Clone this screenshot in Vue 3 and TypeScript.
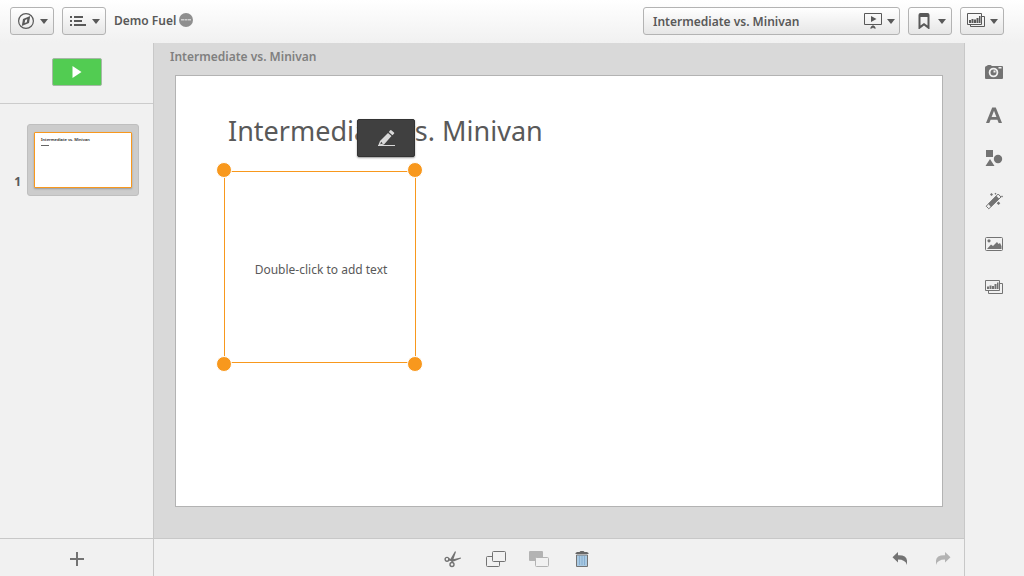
<script setup lang="ts">
import { ref } from 'vue'

interface Slide {
  id: number
  title: string
}

const appName = ref('Demo Fuel')
const storyName = ref('Intermediate vs. Minivan')
const slides = ref<Slide[]>([{ id: 1, title: 'Intermediate vs. Minivan' }])
const handles = ['tl', 'tr', 'bl', 'br']
</script>

<template>
  <div class="story">
    <header class="toolbar">
      <button class="tool" type="button" aria-label="Navigation">
        <svg width="18" height="18" viewBox="0 0 18 18">
          <circle cx="9" cy="9" r="7.4" fill="none" stroke="#595959" stroke-width="1.2" />
          <path d="M13.200 4 12 11 4.800 14 6 7z" fill="#595959" />
          <path d="M10.300 7 9.800 10.200 7.600 11 8.200 8z" fill="#f4f4f4" />
        </svg>
        <i class="caret"></i>
      </button>
      <button class="tool" type="button" aria-label="Menu">
        <svg width="18" height="18" viewBox="0 0 18 18">
          <path d="M1 4h2v2H1zM5 4h9v2H5zM1 8h2v2H1zM5 8h8v2H5zM1 12h2v2H1zM5 12h12v2H5z" fill="#595959" />
        </svg>
        <i class="caret"></i>
      </button>
      <div class="app-title">
        <span>{{ appName }}</span>
        <svg width="14" height="14" viewBox="0 0 14 14">
          <circle cx="7" cy="7" r="7" fill="#8f8f8f" />
          <path d="M2 6h3v1.500H2zM5.500 6h3v1.500h-3zM9 6h3v1.500H9z" fill="#d0d0d0" />
        </svg>
      </div>
      <button class="tool story-picker" type="button">
        <span class="picker-name">{{ storyName }}</span>
        <svg width="18" height="18" viewBox="0 0 18 18">
          <path d="M.5 1.500h17v11H.5zM9 13v2" fill="none" stroke="#595959" />
          <path d="M7 4 12.500 7 7 10zM7.500 14h3l1.500 2.500h-2L9 15.500 8 16.500H6z" fill="#595959" />
        </svg>
        <i class="caret"></i>
      </button>
      <button class="tool" type="button" aria-label="Bookmarks">
        <svg width="18" height="18" viewBox="0 0 18 18">
          <path d="M3.500 3Q3.500 1 5.500 1h7Q14.500 1 14.500 3v14h-1L9 13.500 4.500 17h-1zM5.500 5v8.500L9 11l3.500 2.500V5z" fill="#595959" fill-rule="evenodd" />
        </svg>
        <i class="caret"></i>
      </button>
      <button class="tool" type="button" aria-label="Sheets">
        <svg width="18" height="18" viewBox="0 0 18 18">
          <path d="M.5 1.500h14v11H.5zM15 4.500h2.500v10h-14V13" fill="none" stroke="#595959" />
          <path d="M2 8h2v3H2zM4.500 7h2v4h-2zM7 7.500h2V11H7zM9.500 6h2v5h-2zM12 4h1.500v7H12z" fill="#595959" />
        </svg>
        <i class="caret"></i>
      </button>
    </header>

    <div class="body">
      <aside class="timeline">
        <div class="play-area">
          <button class="play" type="button" aria-label="Play story">
            <svg width="10" height="12" viewBox="0 0 10 12"><path d="M.5 0 9.500 6 .5 12z" fill="#fff" /></svg>
          </button>
        </div>
        <ol class="slides">
          <li v-for="slide in slides" :key="slide.id" class="slide">
            <span class="slide-number">{{ slide.id }}</span>
            <button class="thumb" type="button" :aria-label="`Slide ${slide.id}`">
              <span class="thumb-page">
                <span class="thumb-title">{{ slide.title }}</span>
                <span class="thumb-line"></span>
              </span>
            </button>
          </li>
        </ol>
        <button class="add" type="button" aria-label="Add slide">
          <svg width="16" height="16" viewBox="0 0 16 16"><path d="M1 8h14M8 1v14" stroke="#737373" stroke-width="2" /></svg>
        </button>
      </aside>

      <main class="editor">
        <div class="canvas">
          <h2 class="canvas-title">{{ storyName }}</h2>
          <section class="page">
            <h1 class="page-title">{{ storyName }}</h1>
            <div class="selection">
              <p>Double-click to add text</p>
              <span v-for="h in handles" :key="h" class="handle" :class="h"></span>
            </div>
            <button class="edit" type="button" aria-label="Edit">
              <svg width="18" height="18" viewBox="0 0 18 18">
                <path d="M11 4 14.500 7 7 15.500 1 17 3 12zM11.800 3 13 1.500Q13.600.8 14.300 1.300L17 3.500q.6.500 0 1.200L15.400 6.200z" fill="#d9d9d9" />
                <path d="M4.200 12.800 5.800 14.500 3.200 15.300z" fill="#404040" />
                <path d="M1 16.500h17" stroke="#d9d9d9" />
              </svg>
            </button>
          </section>
        </div>
        <footer class="actions">
          <div class="edit-actions">
            <button type="button" aria-label="Cut">
              <svg width="18" height="18" viewBox="0 0 18 18">
                <g fill="none" stroke="#737373" stroke-width="1.400">
                  <circle cx="3" cy="9.300" r="1.900" /><circle cx="8" cy="14.500" r="2" />
                </g>
                <path d="M4.500 8.300 9 9.300 16.800 7.500 17 8.500 9.500 11.500 4.500 10.500zM7.200 12.800 7 8 11 1.200 12 1.800 9.500 9 8.700 12.800z" fill="#737373" />
              </svg>
            </button>
            <button type="button" aria-label="Copy">
              <svg width="20" height="18" viewBox="0 0 20 18">
                <rect x=".5" y="6.500" width="13" height="10" rx="1" fill="#f1f1f1" stroke="#737373" />
                <rect x="6.500" y="1.500" width="13" height="10" rx="1" fill="#f1f1f1" stroke="#737373" />
              </svg>
            </button>
            <button type="button" aria-label="Paste" disabled>
              <svg width="20" height="18" viewBox="0 0 20 18">
                <rect x="0" y="1" width="14" height="10" rx="1" fill="#b3b3b3" />
                <rect x="6.500" y="7.500" width="13" height="9" rx="1" fill="#f1f1f1" stroke="#b3b3b3" />
              </svg>
            </button>
            <button type="button" aria-label="Delete">
              <svg width="14" height="18" viewBox="0 0 14 18">
                <path d="M.5 4V3L2 2h2.500l1-1h3l1 1H12l1.500 1v1z" fill="#666" />
                <path d="M1.500 5h11v11.500h-11z" fill="#a9c9e2" stroke="#737373" />
                <path d="M4.500 6v9M7 6v9M9.500 6v9" stroke="#86aed0" />
              </svg>
            </button>
          </div>
          <button type="button" aria-label="Undo">
            <svg width="16" height="16" viewBox="0 0 16 16">
              <path d="M6 1v3.300Q14.500 4 15 9.500V14Q13.500 8.500 6 8.500V11.500L.5 6.200z" fill="#737373" />
            </svg>
          </button>
          <button type="button" aria-label="Redo" disabled>
            <svg width="16" height="16" viewBox="0 0 16 16">
              <path d="M10 1v3.300Q1.500 4 1 9.500V14Q2.500 8.500 10 8.500V11.500L15.500 6.200z" fill="#b3b3b3" />
            </svg>
          </button>
        </footer>
      </main>

      <aside class="library">
        <button type="button" aria-label="Snapshot library">
          <svg width="20" height="18" viewBox="0 0 20 18">
            <path d="M2.500 3 4 2h2.500L8 3h10q1 0 1 1v11q0 1-1 1H2q-1 0-1-1V4.500Q1 3 2.500 3z" fill="#737373" />
            <circle cx="9.500" cy="9.500" r="3.900" fill="none" stroke="#f1f1f1" stroke-width="1.800" />
            <path d="M14.500 4h3v1.500h-3zM9.500 9.500v-2h2v2z" fill="#f1f1f1" />
          </svg>
        </button>
        <button type="button" aria-label="Text objects">
          <svg width="18" height="18" viewBox="0 0 18 18">
            <path d="M7.200 1.500h3.600L17 17h-3.300l-1.300-3.300H5.600L4.300 17H1zM9 4.800 6.600 11h4.800z" fill="#737373" fill-rule="evenodd" />
          </svg>
        </button>
        <button type="button" aria-label="Shapes">
          <svg width="18" height="18" viewBox="0 0 18 18">
            <path d="M1 1h7v7H1zM5 10l4.500 7H.5z" fill="#737373" />
            <circle cx="13" cy="10" r="4.200" fill="#737373" />
          </svg>
        </button>
        <button type="button" aria-label="Effects library">
          <svg width="18" height="18" viewBox="0 0 18 18">
            <path d="M1.200 14.200 3.800 16.800 16 5 13.200 2z" fill="#f1f1f1" stroke="#737373" />
            <path d="M3.200 11.700 11.200 3.800 14.200 6.800 6 15z" fill="#737373" />
            <path d="m6.500 1 1.500 1.500L6.500 4 5 2.500zM13.500 9.500l1.800 1.800-1.800 1.800-1.800-1.800zM17 3.500l1 1-1 1-1-1zM10.500.8l1 1-1 1-1-1z" fill="#737373" />
          </svg>
        </button>
        <button type="button" aria-label="Media objects">
          <svg width="18" height="18" viewBox="0 0 18 18">
            <rect x=".5" y="2.500" width="17" height="13" rx="1" fill="none" stroke="#737373" />
            <path d="M2 14 6 9.500l2 1.500 4-4 1.500 2L15 8l1.500 3v3z" fill="#737373" />
            <circle cx="4" cy="5.800" r="1.600" fill="#737373" />
          </svg>
        </button>
        <button type="button" aria-label="Sheet library">
          <svg width="18" height="18" viewBox="0 0 18 18">
            <path d="M.5 2.500h14v10H.5zM15 5.500h2.500v10h-14V13" fill="none" stroke="#737373" />
            <path d="M2 8.500h2V11H2zM4.500 7.500h2V11h-2zM7 8h2v3H7zM9.500 6h2v5h-2zM12 4.500h1.500V11H12z" fill="#737373" />
          </svg>
        </button>
      </aside>
    </div>
  </div>
</template>

<style>
body {
  margin: 0;
}
</style>

<style scoped>
.story {
  display: flex;
  flex-direction: column;
  height: 100vh;
  background: #f1f1f1;
  color: #595959;
  font-family: "Noto Sans", "Open Sans", sans-serif;
  font-size: 12px;
}
.story * {
  box-sizing: border-box;
}
button {
  display: flex;
  align-items: center;
  justify-content: center;
  margin: 0;
  padding: 0;
  border: 0;
  background: none;
  color: inherit;
  font: inherit;
}
svg {
  display: block;
  flex: none;
}
.toolbar {
  display: flex;
  gap: 8px;
  height: 43px;
  padding: 7px 20px 8px 10px;
  background: linear-gradient(#fff, #f1f1f1);
}
.tool {
  gap: 5px;
  width: 44px;
  height: 28px;
  border: 1px solid #b3b3b3;
  border-radius: 3px;
  background: linear-gradient(#fff, #e6e6e6);
}
.caret {
  border: 4px solid transparent;
  border-top: 5px solid #595959;
  border-bottom: 0;
}
.app-title {
  display: flex;
  flex: 1;
  align-items: center;
  gap: 3px;
  height: 26px;
  font-weight: 600;
}
.story-picker {
  width: 257px;
  padding: 0 4px 0 9px;
  font-weight: 600;
}
.picker-name {
  flex: 1;
  text-align: left;
}
.body {
  display: flex;
  flex: 1;
  min-height: 0;
}
.timeline {
  display: flex;
  flex-direction: column;
  width: 154px;
  border-right: 1px solid #c8c8c8;
}
.play-area {
  display: flex;
  justify-content: center;
  padding: 15px 0 17px;
  border-bottom: 1px solid #ccc;
}
.play {
  width: 50px;
  height: 28px;
  border: 1px solid #a6b8a6;
  border-radius: 2px;
  background: #52cc52;
}
.slides {
  flex: 1;
  margin: 0;
  padding: 20px 14px 0 0;
  list-style: none;
}
.slide {
  display: flex;
  justify-content: flex-end;
  align-items: flex-end;
  gap: 6px;
}
.slide-number {
  padding-bottom: 6px;
  font-weight: 700;
  line-height: 16px;
}
.thumb {
  width: 112px;
  height: 72px;
  border: 1px solid #bfbfbf;
  border-radius: 3px;
  background: #ccc;
}
.thumb-page {
  display: flex;
  flex-direction: column;
  gap: 3px;
  width: 98px;
  height: 56px;
  padding: 4px 6px;
  border: 1px solid #f8981d;
  border-radius: 1px;
  background: #fff;
  box-shadow: 0 1px 2px #999;
  text-align: left;
}
.thumb-title {
  color: #222;
  font-size: 4px;
  font-weight: 600;
  line-height: 5px;
  white-space: nowrap;
}
.thumb-line {
  width: 8px;
  height: 1px;
  background: #666;
}
.add {
  height: 38px;
  padding-top: 3px;
  border-top: 1px solid #c8c8c8;
}
.editor {
  display: flex;
  flex: 1;
  flex-direction: column;
  min-width: 0;
}
.canvas {
  display: flex;
  flex: 1;
  flex-direction: column;
  padding: 4px 21px 31px;
  background: #d9d9d9;
}
.canvas-title {
  margin: 0 0 8px -5px;
  color: #808080;
  font-size: 12px;
  font-weight: 600;
  line-height: 20px;
}
.page {
  position: relative;
  flex: 1;
  padding: 35px 52px;
  border: 1px solid #b3b3b3;
  background: #fff;
}
.page-title {
  margin: 0;
  font-size: 27px;
  font-weight: 400;
  line-height: 40px;
  white-space: nowrap;
}
.selection {
  position: absolute;
  top: 95px;
  left: 48px;
  display: flex;
  align-items: center;
  justify-content: center;
  width: 192px;
  height: 192px;
  border: 1px solid #f8981d;
}
.selection p {
  margin: 0;
  padding: 4px 0 0 2px;
  white-space: nowrap;
}
.handle {
  position: absolute;
  width: 16px;
  height: 16px;
  border: 1px solid #fff;
  border-radius: 50%;
  background: #f8981d;
}
.tl {
  top: -10px;
  left: -9px;
}
.tr {
  top: -10px;
  right: -8px;
}
.bl {
  bottom: -10px;
  left: -9px;
}
.br {
  right: -8px;
  bottom: -10px;
}
.edit {
  position: absolute;
  top: 43px;
  left: 181px;
  width: 58px;
  height: 38px;
  border: 1px solid #333;
  border-radius: 2px;
  background: #404040;
  box-shadow: 0 1px 2px #999;
}
.actions {
  display: flex;
  height: 38px;
  padding-top: 3px;
  border-top: 1px solid #c8c8c8;
}
.edit-actions {
  display: flex;
  flex: 1;
  justify-content: center;
  padding-left: 2px;
}
.actions button {
  width: 43px;
}
.library {
  display: flex;
  flex-direction: column;
  width: 60px;
  padding: 7px 1px 0 0;
  border-left: 1px solid #c8c8c8;
}
.library button {
  height: 43px;
}
</style>
